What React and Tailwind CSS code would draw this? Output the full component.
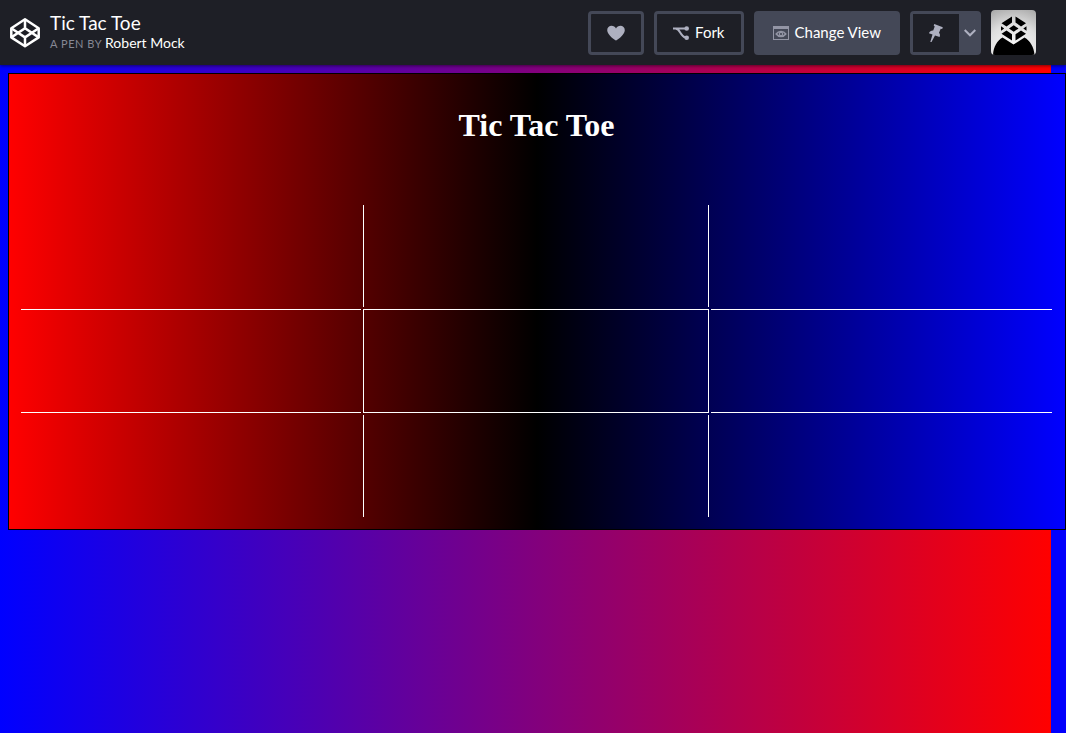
import React, { useState } from "react";

function Logo() {
  return (
    <svg viewBox="0 0 30 30" className="h-[30px] w-[30px]" fill="none" stroke="#fff" strokeWidth="2.5" strokeLinejoin="round" aria-hidden="true">
      <path d="M15 1.300 28.700 10.200V19.400L15 28.300 1.300 19.400V10.200Z" />
      <path d="M1.300 10.200 15 19.400 28.700 10.200M1.300 19.400 15 10.200 28.700 19.400M15 1.300V10.200M15 19.400V28.300" />
    </svg>
  );
}

function Heart() {
  return (
    <svg viewBox="0 0 18 16" className="h-4 w-[18px]" fill="#aeb0c0" aria-hidden="true">
      <path d="M9 15.500C8.400 15.500 .2 9.900 .2 5.200.2 2.500 2.200 .8 4.600 .8 6.500 .8 8.100 1.800 9 3.400 9.900 1.800 11.500 .8 13.400 .8 15.800 .8 17.800 2.500 17.800 5.200 17.800 9.900 9.600 15.500 9 15.500Z" />
    </svg>
  );
}

function ForkIcon() {
  return (
    <svg viewBox="0 0 16 14" className="h-3.5 w-4" fill="none" stroke="#aeb0c0" strokeWidth="2" aria-hidden="true">
      <path d="M0 2.500H13M2.500 2.500C7.500 3 7 10 12.500 11.600" />
      <circle cx="13.700" cy="2.500" r="2.300" fill="#aeb0c0" stroke="none" />
      <circle cx="13.700" cy="11.700" r="2.300" fill="#aeb0c0" stroke="none" />
    </svg>
  );
}

function ViewIcon() {
  return (
    <svg viewBox="0 0 16 14" className="h-3.5 w-4" fill="none" stroke="#9395a5" aria-hidden="true">
      <path d="M0 0H16V14H0ZM1 3V13H15V3Z" fill="#9395a5" fillRule="evenodd" stroke="none" />
      <path d="M3.200 8C5.500 4.700 10.500 4.700 12.800 8 10.500 11.200 5.500 11.200 3.200 8Z" strokeWidth="1.500" />
      <circle cx="8" cy="8" r="1.700" strokeWidth="1.200" />
    </svg>
  );
}

function PinIcon() {
  return (
    <svg viewBox="0 0 16 20" className="h-5 w-4" fill="#aeb0c0" aria-hidden="true">
      <path d="M6.300 1 14.800 4.200 14.200 5.900 12.700 5.800 11 9.800C12.100 11 12.300 12.400 11.600 14L7 12.400 3.500 19H2.300L4.500 11.600 .9 10.300C1.800 8.300 3.300 7.300 5.200 7.500L6.700 3.600 5.700 2.600Z" />
    </svg>
  );
}

function Avatar() {
  return (
    <svg viewBox="0 0 45 45" className="h-[45px] w-[45px] rounded" role="img" aria-label="Profile">
      <defs>
        <radialGradient id="glow" cx="50%" cy="90%" r="100%">
          <stop offset="0" stopColor="#fff" />
          <stop offset=".6" stopColor="#dedede" />
          <stop offset="1" stopColor="#aaa" />
        </radialGradient>
      </defs>
      <rect width="45" height="45" fill="url(#glow)" />
      <path d="M2 45C2.500 37 6 30.500 11.500 27.500L22.500 34.500 33.500 27.500C39 30.500 43 37 43.500 45Z" />
      <path d="M21 6.500V12.500L15.500 16.500 10.500 13.200ZM24.500 6.500V12.500L30 16.500 35 13.200ZM10 16.200 13.200 18.500 10 20.800ZM35.500 16.200 32.300 18.500 35.500 20.800ZM18 18.500 22.700 15.200 27.500 18.500 22.700 21.700ZM15.500 20.500 21 24.300V30.500L10.500 23.700ZM30 20.500 24.500 24.300V30.500L35 23.700Z" />
    </svg>
  );
}

const cells = [
  "",
  "border-x",
  "",
  "border-y",
  "border",
  "border-y",
  "",
  "border-x",
  "",
];

function Board() {
  const [marks, setMarks] = useState(Array(9).fill(""));
  const play = (index) => {
    if (marks[index]) return;
    const next = marks.filter(Boolean).length % 2 ? "O" : "X";
    setMarks(marks.map((mark, i) => (i === index ? next : mark)));
  };
  return (
    <div className="grid grid-cols-[340fr_346fr_341fr] grid-rows-[102px_104px_102px] gap-0.5">
      {cells.map((edges, i) => (
        <button key={i} type="button" aria-label={`Square ${i + 1}`} onClick={() => play(i)} className={`border-white text-5xl text-white ${edges}`}>
          {marks[i]}
        </button>
      ))}
    </div>
  );
}

export default function App() {
  return (
    <div className="flex min-h-screen flex-col bg-[linear-gradient(to_right,#00f,#f00)] bg-[length:calc(100%-15px)_100%] font-['Lato',sans-serif]">
      <header className="flex h-[65px] items-center justify-between bg-[#1e1f26] pr-[30px] pl-2.5 text-white shadow-[0_1px_3px_rgba(0,0,0,0.5)]">
        <div className="flex items-center gap-2.5">
          <a href="#home" aria-label="Home"><Logo /></a>
          <div className="pb-0.5">
            <h1 className="text-[19px] leading-6">Tic Tac Toe</h1>
            <p className="text-[11px] leading-4 text-[#868894]">
              <span className="tracking-wider">A PEN BY</span>{" "}
              <a href="#author" className="text-sm leading-4 text-white">Robert Mock</a>
            </p>
          </div>
        </div>
        <div className="flex items-center gap-2.5">
          <button type="button" aria-label="Love" className="flex h-11 w-14 items-center justify-center rounded border-3 border-[#444857]"><Heart /></button>
          <button type="button" className="flex h-11 items-center gap-1.5 rounded border-3 border-[#444857] px-4 text-[15px]"><ForkIcon />Fork</button>
          <button type="button" className="flex h-11 items-center gap-1.5 rounded bg-[#444857] px-[19px] text-[15px]"><ViewIcon />Change View</button>
          <div className="flex h-11 rounded border-3 border-[#444857] bg-[#444857]">
            <button type="button" aria-label="Pin" className="flex w-[46px] items-center justify-center bg-[#1e1f26]"><PinIcon /></button>
            <button type="button" aria-label="More pin options" className="flex w-[19px] items-center justify-center pl-0.5">
              <svg viewBox="0 0 12 8" className="h-2 w-3" fill="none" stroke="#aeb0c0" strokeWidth="2" aria-hidden="true"><path d="M.7 1 6 6.300 11.300 1" /></svg>
            </button>
          </div>
          <a href="#profile"><Avatar /></a>
        </div>
      </header>
      <main className="mt-2 ml-2 border border-black bg-[linear-gradient(to_right,#f00,#000,#00f)] pt-[33px] pr-[13px] pb-3 pl-3">
        <h2 className="mb-[62px] text-center font-['Liberation_Serif',serif] text-[32px] leading-9 font-bold text-white">Tic Tac Toe</h2>
        <Board />
      </main>
    </div>
  );
}
